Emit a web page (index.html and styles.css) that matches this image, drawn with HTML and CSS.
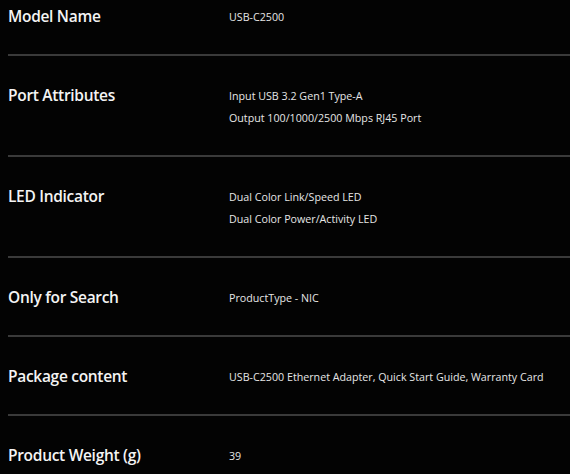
FILE: index.html
```html
<!DOCTYPE html>
<html>
<head>
<meta charset="utf-8">
<link rel="stylesheet" href="styles.css">
</head>
<body>
<div class="specs">
  <div class="row row-first">
    <div class="label">Model Name</div>
    <div class="value"><p>USB-C2500</p></div>
  </div>
  <div class="row">
    <div class="label">Port Attributes</div>
    <div class="value"><p>Input USB 3.2 Gen1 Type-A</p><p>Output 100/1000/2500 Mbps RJ45 Port</p></div>
  </div>
  <div class="row">
    <div class="label">LED Indicator</div>
    <div class="value"><p>Dual Color Link/Speed LED</p><p>Dual Color Power/Activity LED</p></div>
  </div>
  <div class="row">
    <div class="label">Only for Search</div>
    <div class="value"><p>ProductType - NIC</p></div>
  </div>
  <div class="row">
    <div class="label">Package content</div>
    <div class="value"><p>USB-C2500 Ethernet Adapter, Quick Start Guide, Warranty Card</p></div>
  </div>
  <div class="row row-last">
    <div class="label">Product Weight (g)</div>
    <div class="value"><p>39</p></div>
  </div>
</div>
</body>
</html>
```
FILE: styles.css
```css
html, body {
  margin: 0;
  padding: 0;
  background: #030303;
  height: 100%;
  overflow: hidden;
}
body {
  font-family: "Open Sans", "Noto Sans", sans-serif;
  color: #fff;
}
.specs {
  padding-left: 8px;
}
.row {
  display: grid;
  grid-template-columns: 221px 1fr;
  padding: 29px 0 26px;
  border-bottom: 2px solid #3a3a3a;
}
.row-first {
  padding-top: 6px;
}
.row-last {
  border-bottom: none;
}
.label {
  font-size: 15.5px;
  font-weight: 600;
  letter-spacing: -0.3px;
  line-height: 21px;
  color: #f4f4f4;
}
.value {
  font-size: 10.7px;
  line-height: 22px;
  color: #e6e6e6;
}
.value p {
  margin: 0;
}
```
